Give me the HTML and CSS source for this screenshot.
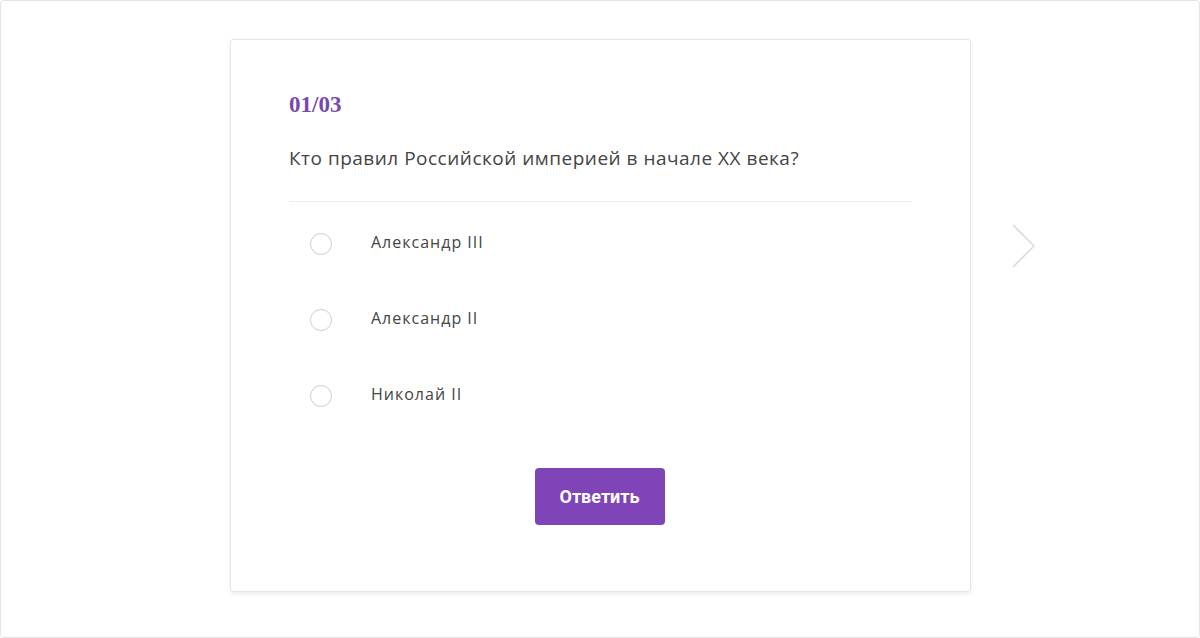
FILE: index.html
```html
<!DOCTYPE html>
<html lang="ru">
<head>
<meta charset="utf-8">
<link rel="stylesheet" href="styles.css">
</head>
<body>
<div class="frame">
  <div class="stage">
    <div class="card">
      <div class="counter">01/03</div>
      <div class="question">Кто правил Российской империей в начале XX века?</div>
      <ul class="options">
        <li class="option"><span class="radio"></span><span class="label">Александр III</span></li>
        <li class="option"><span class="radio"></span><span class="label">Александр II</span></li>
        <li class="option"><span class="radio"></span><span class="label">Николай II</span></li>
      </ul>
      <div class="actions"><button class="btn">Ответить</button></div>
    </div>
    <div class="next">
      <svg width="24" height="44" viewBox="0 0 24 44"><path d="M1 1 L22 22 L1 43" fill="none" stroke="#dcdcdc" stroke-width="1.6"/></svg>
    </div>
  </div>
</div>
</body>
</html>
```
FILE: styles.css
```css
* { box-sizing: border-box; }
html, body { margin: 0; padding: 0; background: #fff; }
body { width: 1200px; height: 638px; font-family: "Open Sans", sans-serif; }
.frame {
  width: 1200px; height: 638px;
  border: 1px solid #e3e3e3;
  border-radius: 4px;
  padding-top: 38px;
}
.stage { display: flex; align-items: flex-start; padding-left: 229px; }
.card {
  width: 741px; height: 553px;
  border: 1px solid #e6e6e6;
  border-radius: 3px;
  box-shadow: 0 2px 4px rgba(0,0,0,0.08);
  padding: 50px 58px 0 58px;
}
.counter {
  font-family: "Liberation Serif", serif;
  font-weight: bold;
  font-size: 23px;
  color: #7a49ad;
  line-height: 30px;
}
.question {
  margin-top: 24px;
  font-size: 19px;
  color: #444;
  line-height: 28px;
  letter-spacing: 0.5px;
  padding-bottom: 29px;
  border-bottom: 1px solid #ececec;
}
.options { list-style: none; margin: 0; padding: 0; margin-top: 28px; }
.option { display: flex; align-items: center; height: 24px; margin-bottom: 52px; padding-left: 21px; }
.radio {
  width: 22px; height: 22px; border-radius: 50%;
  border: 1.5px solid #cfcfcf;
  margin-top: 4px;
  flex: none;
}
.label { margin-left: 39px; font-size: 16px; color: #444; letter-spacing: 1px; }
.actions { display: flex; justify-content: center; margin-top: 62px; padding-right: 2px; }
.btn {
  width: 130px; height: 57px;
  background: #7f44b8;
  border: none; border-radius: 4px;
  color: #fff;
  font-family: Roboto, sans-serif;
  font-weight: bold;
  font-size: 18px;
}
.next { margin-left: 41px; margin-top: 185px; }
```
